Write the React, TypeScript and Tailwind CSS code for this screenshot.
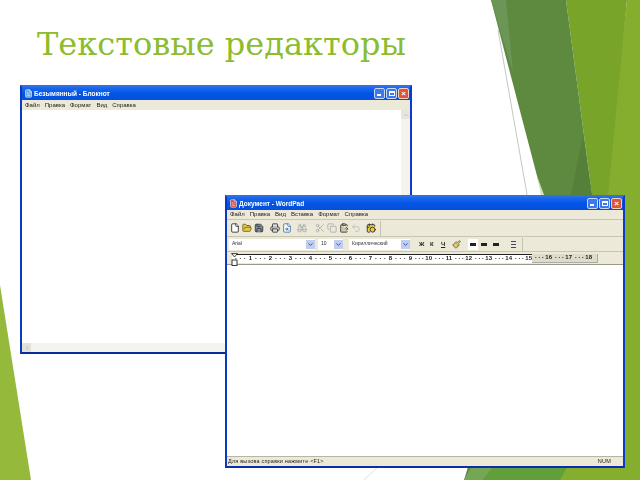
import {
  File,
  FolderOpen,
  Save,
  Printer,
  FileSearch,
  Binoculars,
  Scissors,
  Copy,
  ClipboardPaste,
  Undo2,
  CalendarClock,
  Paintbrush,
  ChevronDown,
  ChevronUp,
  ChevronLeft,
  FileText,
} from "lucide-react";

function Backdrop() {
  return (
    <svg className="absolute inset-0" width="640" height="480" viewBox="0 0 640 480">
      <polygon points="0,285 31,480 0,480" fill="#95b93b" />
      <polygon points="627,0 640,0 640,480 555,480 600,300 600,240" fill="#86ae2e" />
      <polygon points="566,0 627,0 608,195 600,240 592,195" fill="#78a42a" />
      <polygon points="491,0 566,0 592,195 600,240 560,480 464,480 545,215 542,195" fill="#5d8a3f" />
      <polygon points="491,0 506,0 513,72" fill="#6b9658" />
      <polygon points="464,480 483,480 500,458 476,458" fill="#74a653" />
      <polygon points="483,480 560,480 572,458 500,458" fill="#619f3a" />
      <polygon points="583,135 592,195 595,220 566,220" fill="#54803a" />
      <polygon points="537,176 546,200 542,200" fill="#d3dfb9" />
      <line x1="498" y1="30" x2="528" y2="200" stroke="#c4c8c0" strokeWidth="1" />
      <line x1="379" y1="466" x2="364" y2="480" stroke="#dde0d8" strokeWidth="1" />
    </svg>
  );
}

function WindowButtons() {
  return (
    <div className="ml-auto flex gap-[1px]">
      <div className="flex h-[11px] w-[11px] items-end rounded-[2px] border border-[#c8d8f8] bg-[#3f78e8] p-[2px]">
        <div className="h-[2px] w-[4px] bg-white" />
      </div>
      <div className="flex h-[11px] w-[11px] items-center justify-center rounded-[2px] border border-[#c8d8f8] bg-[#3f78e8]">
        <div className="h-[5px] w-[6px] border border-t-2 border-white" />
      </div>
      <div className="flex h-[11px] w-[11px] items-center justify-center rounded-[2px] border border-[#f0d0c0] bg-[#d9573a] text-[8px] leading-none font-bold text-white">
        ×
      </div>
    </div>
  );
}

function TitleBar({ title, icon }: { title: string; icon: string }) {
  return (
    <div className="flex h-[13px] shrink-0 items-center gap-[1px] bg-gradient-to-b from-[#1a6cf0] via-[#0454e4] to-[#0350dc] pr-[1px] pl-[2px] font-['Liberation_Sans',sans-serif]">
      <FileText size={9} color="#ffffff" fill={icon} strokeWidth={1.5} />
      <span className="text-[6.5px] font-bold text-white blur-[0.4px]">{title}</span>
      <WindowButtons />
    </div>
  );
}

function Menu({ items, className }: { items: string[]; className: string }) {
  return (
    <div className={`flex shrink-0 items-center gap-[5px] bg-[#ece9d8] pl-[3px] font-['Liberation_Sans',sans-serif] text-[6px] text-[#222] blur-[0.4px] ${className}`}>
      {items.map((item) => (
        <span key={item}>{item}</span>
      ))}
    </div>
  );
}

function Notepad() {
  return (
    <div className="absolute top-[85px] left-[20px] flex h-[269px] w-[392px] flex-col border-[2px] border-t-[#2f6fe8] border-r-[#0b3bc8] border-b-[#0a2a98] border-l-[#0a3ac4] bg-white">
      <TitleBar title="Безымянный - Блокнот" icon="#5aa0e0" />
      <Menu items={["Файл", "Правка", "Формат", "Вид", "Справка"]} className="h-[10px]" />
      <div className="flex min-h-0 flex-1 justify-end bg-white">
        <div className="flex w-[9px] flex-col items-center bg-[#f4f3ee]">
          <div className="flex h-[9px] w-[9px] items-center justify-center bg-[#e6e6df]">
            <ChevronUp size={6} color="#aaa" />
          </div>
        </div>
      </div>
      <div className="flex h-[9px] shrink-0 items-center bg-[#f4f3ee]">
        <div className="flex h-[9px] w-[9px] items-center justify-center bg-[#e2e2da]">
          <ChevronLeft size={6} color="#999" />
        </div>
      </div>
    </div>
  );
}

function ToolIcon({ icon: Icon, color, fill }: { icon: typeof File; color: string; fill?: string }) {
  return (
    <div className="flex w-[12px] justify-center">
      <Icon size={10} color={color} fill={fill ?? "none"} strokeWidth={2} />
    </div>
  );
}

function Combo({ text, className }: { text: string; className: string }) {
  return (
    <div className={`flex h-[11px] items-center justify-between bg-white pl-[3px] ${className}`}>
      <span className="text-[5px] text-[#333] blur-[0.35px]">{text}</span>
      <div className="flex h-[9px] w-[9px] items-center justify-center bg-[#c0cdf0]">
        <ChevronDown size={7} color="#2a4aa0" strokeWidth={3} />
      </div>
    </div>
  );
}

function AlignIcon() {
  return <div className="h-[3px] w-[6px] bg-[#222]" />;
}

function RulerCell({ n }: { n: number }) {
  return (
    <div className="flex w-[20px] shrink-0 justify-between pl-[3px]">
      <span>·</span>
      <span>·</span>
      <span>·</span>
      <span>{n}</span>
    </div>
  );
}

function Ruler() {
  const white = Array.from({ length: 15 }, (_, i) => i + 1);
  return (
    <div className="relative flex h-[13px] shrink-0 items-center border-t border-[#c8c5b4] bg-[#ece9d8] pl-[5px] font-['Liberation_Sans',sans-serif] text-[6px] font-bold text-[#222]">
      <div className="flex h-[9px] w-[300px] items-center overflow-hidden border-t border-[#222] bg-white blur-[0.3px]">
        {white.map((n) => (
          <RulerCell key={n} n={n} />
        ))}
      </div>
      <div className="flex h-[9px] w-[66px] items-center overflow-hidden border-r border-b border-[#aaa] bg-[#dedbca] blur-[0.3px]">
        {[16, 17, 18].map((n) => (
          <RulerCell key={n} n={n} />
        ))}
      </div>
      <svg className="absolute top-[1px] left-[4px]" width="7" height="13" viewBox="0 0 7 13">
        <polygon points="0.5,0.5 6.5,0.5 3.5,4" fill="#ece9d8" stroke="#222" strokeWidth="0.8" />
        <rect x="1" y="7" width="5" height="5.5" fill="#fff" stroke="#222" strokeWidth="0.9" />
      </svg>
    </div>
  );
}

function Wordpad() {
  return (
    <div className="absolute top-[195px] left-[225px] flex h-[273px] w-[400px] flex-col border-[2px] border-t-[#2f6fe8] border-r-[#0b3bc8] border-b-[#0a2fa8] border-l-[#0a3ac4] bg-white">
      <TitleBar title="Документ - WordPad" icon="#d04040" />
      <Menu
        items={["Файл", "Правка", "Вид", "Вставка", "Формат", "Справка"]}
        className="h-[10px] border-b border-[#c8c5b4]"
      />
      <div className="flex h-[16px] shrink-0 items-center bg-[#ece9d8] pl-[2px]">
        <div className="flex h-[15px] w-[152px] items-center border-r border-[#c5c2b0]">
          <ToolIcon icon={File} color="#222" fill="#fff" />
          <ToolIcon icon={FolderOpen} color="#6a5a10" fill="#e8c848" />
          <ToolIcon icon={Save} color="#333" fill="#8090a8" />
          <div className="w-[4px]" />
          <ToolIcon icon={Printer} color="#333" fill="#ddd" />
          <ToolIcon icon={FileSearch} color="#3a6a9a" fill="#fff" />
          <div className="w-[3px]" />
          <ToolIcon icon={Binoculars} color="#aaa" />
          <div className="w-[6px]" />
          <ToolIcon icon={Scissors} color="#aaa" />
          <ToolIcon icon={Copy} color="#aaa" />
          <ToolIcon icon={ClipboardPaste} color="#334" fill="#cfc8a0" />
          <ToolIcon icon={Undo2} color="#bbb" />
          <div className="w-[3px]" />
          <ToolIcon icon={CalendarClock} color="#223" fill="#e8d040" />
        </div>
      </div>
      <div className="flex h-[15px] shrink-0 items-center border-t border-[#c8c5b4] bg-[#ece9d8] pl-[2px] font-['Liberation_Sans',sans-serif]">
        <Combo text="Arial" className="w-[86px]" />
        <Combo text="10" className="ml-[3px] w-[25px]" />
        <Combo text="Кириллический" className="ml-[6px] w-[61px]" />
        <div className="flex h-[13px] w-[113px] items-center border-r border-[#c5c2b0] pl-[9px] text-[6px] font-bold text-[#222] blur-[0.2px]">
          <span className="w-[11px]">Ж</span>
          <span className="w-[11px]">К</span>
          <span className="w-[11px] underline">Ч</span>
          <Paintbrush size={9} color="#554" fill="#e8d070" className="mr-[7px]" />
          <div className="flex h-[11px] w-[10px] items-center justify-center bg-white">
            <AlignIcon />
          </div>
          <div className="ml-[3px]">
            <AlignIcon />
          </div>
          <div className="ml-[6px]">
            <AlignIcon />
          </div>
          <div className="ml-[12px] flex h-[7px] w-[5px] flex-col justify-between">
            <div className="h-[1px] bg-[#447]" />
            <div className="h-[1px] bg-[#447]" />
            <div className="h-[1px] bg-[#447]" />
          </div>
        </div>
      </div>
      <Ruler />
      <div className="flex-1 border-t border-[#9a9888] bg-white" />
      <div className="flex h-[10px] shrink-0 items-center justify-between border-t border-[#b8b5a4] bg-[#ece9d8] pr-[12px] pl-[1px] font-['Liberation_Sans',sans-serif] text-[5.5px] tracking-[0.2px] text-[#222] blur-[0.35px]">
        <span>Для вызова справки нажмите &lt;F1&gt;</span>
        <span>NUM</span>
      </div>
    </div>
  );
}

export default function App() {
  return (
    <div className="relative h-[480px] w-[640px] overflow-hidden bg-white">
      <Backdrop />
      <h1 className="absolute top-[21px] left-[37px] font-['DejaVu_Serif',serif] text-[32px] leading-[46px] text-[#8cbc30]">
        Текстовые редакторы
      </h1>
      <Notepad />
      <Wordpad />
    </div>
  );
}
